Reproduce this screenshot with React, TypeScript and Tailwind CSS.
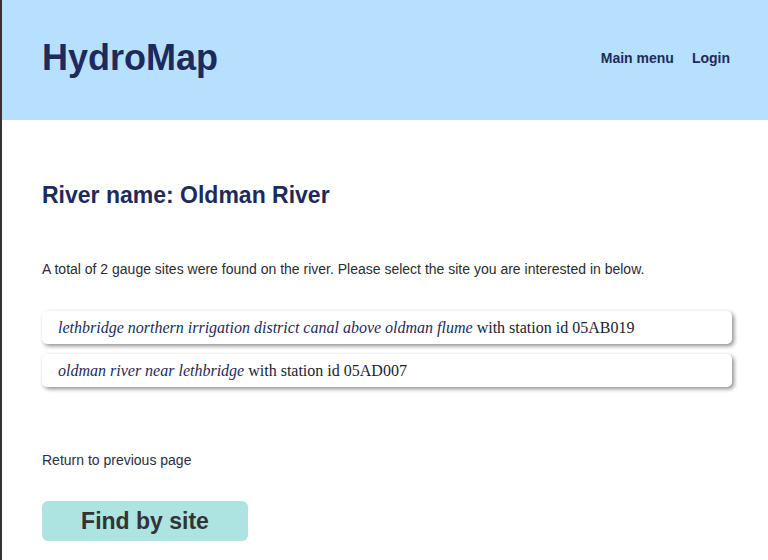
export default function App() {
  return (
    <div className="min-h-[560px] border-l-2 border-[#333333] bg-white font-['Liberation_Sans',Arial,sans-serif]">
      <Header />
      <main className="pl-10 pr-9 pt-[62px]">
        <h2 className="text-[23px] leading-[26px] font-bold text-[#1e2a5c]">River name: Oldman River</h2>
        <p className="mt-[53px] text-sm leading-4 text-[#2b2b33]">
          A total of 2 gauge sites were found on the river. Please select the site you are interested in below.
        </p>
        <div className="mt-[34px] flex flex-col gap-[10px]">
          <SiteCard name="lethbridge northern irrigation district canal above oldman flume" id="05AB019" />
          <SiteCard name="oldman river near lethbridge" id="05AD007" />
        </div>
        <a href="#" className="mt-[65px] block text-sm leading-4 text-[#2a2d45]">
          Return to previous page
        </a>
        <button className="mt-[33px] h-10 w-[206px] rounded-md bg-[#ade3e0] text-[23px] font-bold text-[#333333]">
          Find by site
        </button>
      </main>
    </div>
  );
}

function Header() {
  return (
    <header className="flex h-[120px] items-center justify-between bg-[#b7e0fe] pb-1 pl-10 pr-[38px]">
      <h1 className="text-[36px] font-bold text-[#1e2a5c]">HydroMap</h1>
      <nav className="flex gap-[18px] text-sm font-bold text-[#1e2a5c]">
        <a href="#">Main menu</a>
        <a href="#">Login</a>
      </nav>
    </header>
  );
}

function SiteCard({ name, id }: { name: string; id: string }) {
  return (
    <div className="rounded-[5px] bg-white px-4 py-[7px] font-['Liberation_Serif','Times_New_Roman',serif] text-base leading-[19px] text-[#222230] shadow-[2px_2px_4px_rgba(0,0,0,0.45)]">
      <i className="text-[#1e2a5c]">{name}</i> with station id {id}
    </div>
  );
}
